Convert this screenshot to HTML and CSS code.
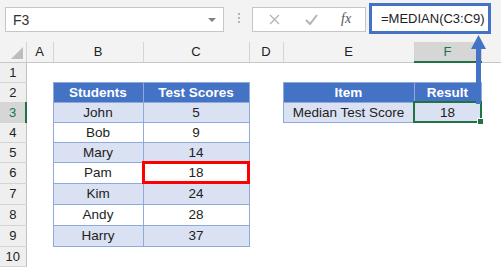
FILE: index.html
```html
<!DOCTYPE html>
<html lang="en">
<head>
  <meta charset="UTF-8">
  <title>MEDIAN</title>
  <link rel="stylesheet" href="styles.css">
</head>
<body>
  <div class="topbar">
    <div class="namebox">F3<span class="drop"></span></div>
    <div class="dots"><i></i><i></i><i></i></div>
    <div class="icons">
      <svg class="ic-x" width="11" height="11" viewBox="0 0 11 11">
        <path d="M1 1 L10 10 M10 1 L1 10" stroke="#b3b3b3" stroke-width="1.3" fill="none"/>
      </svg>
      <svg class="ic-ok" width="13" height="11" viewBox="0 0 13 11">
        <path d="M1 6 L5 10 L12 1" stroke="#b3b3b3" stroke-width="2" fill="none"/>
      </svg>
      <span class="ic-fx">fx</span>
    </div>
    <div class="formula">=MEDIAN(C3:C9)</div>
  </div>

  <table class="sheet">
    <colgroup>
      <col class="w-rh"><col class="w-a"><col class="w-b"><col class="w-c">
      <col class="w-d"><col class="w-e"><col class="w-f"><col class="w-g">
    </colgroup>
    <tr class="hdr">
      <th class="corner"><span class="tri"></span></th>
      <th>A</th><th>B</th><th>C</th><th>D</th><th>E</th><th class="sel">F</th><th></th>
    </tr>
    <tr><td class="rh">1</td><td></td><td></td><td></td><td></td><td></td><td></td><td></td></tr>
    <tr><td class="rh">2</td><td></td><td class="th">Students</td><td class="th">Test Scores</td><td></td><td class="th">Item</td><td class="th">Result</td><td></td></tr>
    <tr><td class="rh sel">3</td><td></td><td class="t band">John</td><td class="t band">5</td><td></td><td class="t band">Median Test Score</td><td class="t band active">18</td><td></td></tr>
    <tr><td class="rh">4</td><td></td><td class="t">Bob</td><td class="t">9</td><td></td><td></td><td></td><td></td></tr>
    <tr><td class="rh">5</td><td></td><td class="t band">Mary</td><td class="t band">14</td><td></td><td></td><td></td><td></td></tr>
    <tr class="r21"><td class="rh">6</td><td></td><td class="t">Pam</td><td class="t mark">18</td><td></td><td></td><td></td><td></td></tr>
    <tr class="r21"><td class="rh">7</td><td></td><td class="t band">Kim</td><td class="t band">24</td><td></td><td></td><td></td><td></td></tr>
    <tr class="r21"><td class="rh">8</td><td></td><td class="t">Andy</td><td class="t">28</td><td></td><td></td><td></td><td></td></tr>
    <tr class="r21"><td class="rh">9</td><td></td><td class="t band">Harry</td><td class="t band">37</td><td></td><td></td><td></td><td></td></tr>
    <tr><td class="rh">10</td><td></td><td></td><td></td><td></td><td></td><td></td><td></td></tr>
  </table>

  <!-- arrow from result cell up to the formula -->
  <svg class="arrow" width="18" height="72" viewBox="0 0 18 72">
    <polygon points="8.5,1 16,15 1,15" fill="#4472c4"/>
    <rect x="6" y="14" width="5" height="56" fill="#4472c4"/>
  </svg>
</body>
</html>
```

FILE: styles.css
```css
body {
  margin: 0;
  font-family: "Liberation Sans", Arial, sans-serif;
  font-size: 13px;
  color: #222;
  background: #fff;
  width: 501px;
  height: 267px;
  overflow: hidden;
  position: relative;
}

.topbar {
  height: 42px;
  background: #f3f3f3;
  display: flex;
  align-items: flex-start;
  padding-left: 5px;
  box-sizing: border-box;
}

.namebox {
  width: 219px;
  height: 25px;
  margin-top: 7px;
  box-sizing: border-box;
  background: #fff;
  border: 1px solid #c6c6c6;
  display: flex;
  align-items: center;
  padding-left: 7px;
  font-size: 14px;
  color: #333;
  position: relative;
}

.drop {
  position: absolute;
  right: 7px;
  top: 10px;
  border-left: 4px solid transparent;
  border-right: 4px solid transparent;
  border-top: 4px solid #808080;
}

.dots {
  margin: 13px 0 0 14px;
  display: flex;
  flex-direction: column;
  gap: 2px;
}

.dots i {
  display: block;
  width: 2px;
  height: 2px;
  background: #b5b5b5;
}

.icons {
  width: 114px;
  height: 25px;
  margin: 7px 0 0 12px;
  box-sizing: border-box;
  background: #fff;
  border: 1px solid #c6c6c6;
  position: relative;
}

.icons svg,
.icons span {
  position: absolute;
}

.ic-x {
  left: 16px;
  top: 6px;
}

.ic-ok {
  left: 52px;
  top: 6px;
}

.ic-fx {
  left: 88px;
  top: 3px;
  font-family: "Liberation Serif", serif;
  font-style: italic;
  font-size: 14px;
  color: #555;
}

.formula {
  width: 122px;
  height: 31px;
  margin: 3px 0 0 3px;
  box-sizing: border-box;
  background: #fff;
  border: 3px solid #4472c4;
  font-size: 13px;
  color: #222;
  display: flex;
  align-items: center;
  padding-left: 9px;
}

.sheet {
  border-collapse: collapse;
  table-layout: fixed;
  width: 501px;
}

.w-rh { width: 26px; }
.w-a { width: 27px; }
.w-b { width: 90px; }
.w-c { width: 106px; }
.w-d { width: 34px; }
.w-e { width: 131px; }
.w-f { width: 67px; }
.w-g { width: 20px; }

.sheet tr { height: 20px; }
.sheet tr.r21 { height: 21px; }

.sheet th,
.sheet td {
  padding: 0;
  text-align: center;
  font-weight: normal;
  white-space: nowrap;
}

.hdr th {
  background: #f3f3f3;
  border-right: 1px solid #d4d4d4;
  border-bottom: 1px solid #c8c8c8;
  color: #222;
}

.hdr th.sel {
  background: #d6d6d6;
  color: #217346;
  border-bottom: 2px solid #217346;
}

.corner {
  position: relative;
}

.tri {
  position: absolute;
  right: 3px;
  bottom: 3px;
  border-left: 12px solid transparent;
  border-bottom: 12px solid #bdbdbd;
}

.rh {
  background: #efefef;
  border-bottom: 1px solid #d4d4d4;
  border-right: 1px solid #c0c0c0;
  color: #222;
}

.rh.sel {
  background: #d6d6d6;
  color: #217346;
  border-right: 2px solid #217346;
}

.th {
  background: #4472c4;
  color: #fff;
  font-weight: bold !important;
  font-size: 13.5px;
  border: 1px solid #8eaadb;
}

.t {
  border: 1px solid #8eaadb;
  color: #222;
  font-size: 13.5px;
}

.band {
  background: #d9e1f2;
}

.mark {
  outline: 3px solid #ff0000;
  outline-offset: -2px;
}

.active {
  outline: 2px solid #217346;
  outline-offset: -1px;
  position: relative;
}

.active::after {
  content: "";
  position: absolute;
  right: -3px;
  bottom: -3px;
  width: 5px;
  height: 5px;
  background: #217346;
  border: 1px solid #fff;
}

.arrow {
  position: absolute;
  left: 470px;
  top: 34px;
}
```
